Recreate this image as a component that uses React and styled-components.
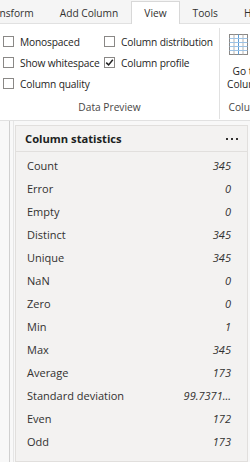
import React from 'react'
import styled, { createGlobalStyle } from 'styled-components'

const GlobalStyle = createGlobalStyle`
  html, body {
    margin: 0;
    padding: 0;
    background: #f8f8f8;
    font-family: "Open Sans", "Noto Sans", sans-serif;
    color: #252423;
  }
`;

const tabs = ['Transform', 'Add Column', 'View', 'Tools', 'Help'];

const stats = [
  ['Count', '345'],
  ['Error', '0'],
  ['Empty', '0'],
  ['Distinct', '345'],
  ['Unique', '345'],
  ['NaN', '0'],
  ['Zero', '0'],
  ['Min', '1'],
  ['Max', '345'],
  ['Average', '173'],
  ['Standard deviation', '99.7371...'],
  ['Even', '172'],
  ['Odd', '173'],
];

function CheckBox({ label, checked }) {
  return (
    <Check>
      <Box>
        {checked && (
          <svg width="9" height="9" viewBox="0 0 9 9">
            <path d="M1.2 4.6 L3.6 6.9 L7.8 1.8" fill="none" stroke="#222" strokeWidth="1.5" />
          </svg>
        )}
      </Box>
      {label}
    </Check>
  );
}

export default function App() {
  return (
    <Page>
      <GlobalStyle />
      <TabBar>
        {tabs.map((t, i) => (
          <Tab key={t} active={t === 'View'} first={i === 0}>{t}</Tab>
        ))}
      </TabBar>
      <Ribbon>
        <Group>
          <CheckGrid>
            <CheckBox label="Monospaced" />
            <CheckBox label="Column distribution" />
            <CheckBox label="Show whitespace" />
            <CheckBox label="Column profile" checked />
            <CheckBox label="Column quality" />
          </CheckGrid>
          <GroupLabel>Data Preview</GroupLabel>
        </Group>
        <Group narrow>
          <BigButton>
            <svg width="19" height="21" viewBox="0 0 19 21">
              <rect x="0.5" y="0.5" width="18" height="20" fill="#fff" stroke="#8a8886" />
              {[5, 9.5, 14].map(x => (
                <line key={x} x1={x} y1="0.5" x2={x} y2="20.5" stroke={x === 9.5 ? '#5b9bd5' : '#b5b3b1'} />
              ))}
              {[4.5, 8.5, 12.5, 16.5].map(y => (
                <line key={y} x1="0.5" y1={y} x2="18.5" y2={y} stroke="#9cc2e5" />
              ))}
            </svg>
            <span>Go to<br />Column</span>
          </BigButton>
          <GroupLabel>Columns</GroupLabel>
        </Group>
      </Ribbon>
      <Body>
        <SideEdge />
        <Panel>
          <PanelHeader>
            <Title>Column statistics</Title>
            <Dots>
              <i /><i /><i />
            </Dots>
          </PanelHeader>
          <StatList>
            {stats.map(([k, v]) => (
              <StatRow key={k}>
                <span>{k}</span>
                <Value>{v}</Value>
              </StatRow>
            ))}
          </StatList>
        </Panel>
      </Body>
    </Page>
  );
}

const Page = styled.div`
  width: 250px;
  height: 462px;
  overflow: hidden;
  display: flex;
  flex-direction: column;
`;

const TabBar = styled.div`
  display: flex;
  height: 24px;
  padding-top: 1px;
  box-sizing: border-box;
  background: #f5f5f5;
  white-space: nowrap;
  border-bottom: 1px solid #e1e1e1;
`;

const Tab = styled.div`
  flex: none;
  padding: 0 12px;
  margin-left: ${p => (p.first ? '-29px' : '0')};
  font-size: 10.2px;
  line-height: 22px;
  color: #323130;
  background: ${p => (p.active ? '#fff' : 'transparent')};
  border: 1px solid ${p => (p.active ? '#d8d8d8' : 'transparent')};
  border-bottom: none;
  margin-bottom: -1px;
  height: 23px;
  box-sizing: border-box;
`;

const Ribbon = styled.div`
  display: flex;
  height: 96px;
  background: #fff;
  border-bottom: 1px solid #e1e1e1;
  white-space: nowrap;
`;

const Group = styled.div`
  flex: none;
  width: ${p => (p.narrow ? '60px' : '220px')};
  display: flex;
  flex-direction: column;
  border-right: 1px solid #e1e1e1;
  box-sizing: border-box;
  margin: 4px 0 1px;
`;

const CheckGrid = styled.div`
  flex: 1;
  display: grid;
  grid-template-columns: 101px 1fr;
  grid-auto-rows: 21px;
  padding: 3px 0 0 3px;
  align-content: start;
`;

const Check = styled.div`
  display: flex;
  align-items: center;
  gap: 6px;
  font-size: 10.2px;
  letter-spacing: -0.15px;
  color: #252423;
`;

const Box = styled.div`
  width: 9px;
  height: 9px;
  border: 1px solid #8a8886;
  background: #fff;
  display: flex;
  align-items: center;
  justify-content: center;
  flex: none;
  svg { display: block; }
`;

const GroupLabel = styled.div`
  font-size: 10.2px;
  color: #484644;
  text-align: center;
  height: 21px;
  line-height: 18px;
`;

const BigButton = styled.div`
  flex: 1;
  display: flex;
  flex-direction: column;
  align-items: flex-start;
  padding: 6px 0 0 9px;
  gap: 10px;
  font-size: 10.2px;
  line-height: 13px;
  color: #252423;
  span { text-align: center; margin-left: -2px; }
  svg { display: block; }
`;

const Body = styled.div`
  flex: 1;
  display: flex;
  background: #f8f8f8;
  min-height: 0;
`;

const SideEdge = styled.div`
  width: 3px;
  margin-left: 9px;
  border-left: 1px solid #d0d0d0;
  border-right: 1px solid #e6e6e6;
  flex: none;
`;

const Panel = styled.div`
  flex: none;
  width: 233px;
  margin: 4px 0 0 1px;
  background: #f3f2f1;
  border: 1px solid #e1dfdd;
  box-sizing: border-box;
  display: flex;
  flex-direction: column;
`;

const PanelHeader = styled.div`
  display: flex;
  align-items: center;
  justify-content: space-between;
  height: 25px;
  padding: 0 9px 0 9px;
  border-bottom: 1px solid #e1dfdd;
`;

const Title = styled.div`
  font-size: 11.2px;
  font-weight: 700;
  color: #201f1e;
`;

const Dots = styled.div`
  display: flex;
  gap: 3px;
  i {
    width: 2px;
    height: 2px;
    background: #323130;
    display: block;
  }
`;

const StatList = styled.div`
  display: flex;
  flex-direction: column;
  padding: 2px 16px 0 11px;
`;

const StatRow = styled.div`
  display: flex;
  justify-content: space-between;
  align-items: center;
  height: 23px;
  font-size: 11px;
  color: #323130;
`;

const Value = styled.span`
  font-style: italic;
  color: #323130;
`;
